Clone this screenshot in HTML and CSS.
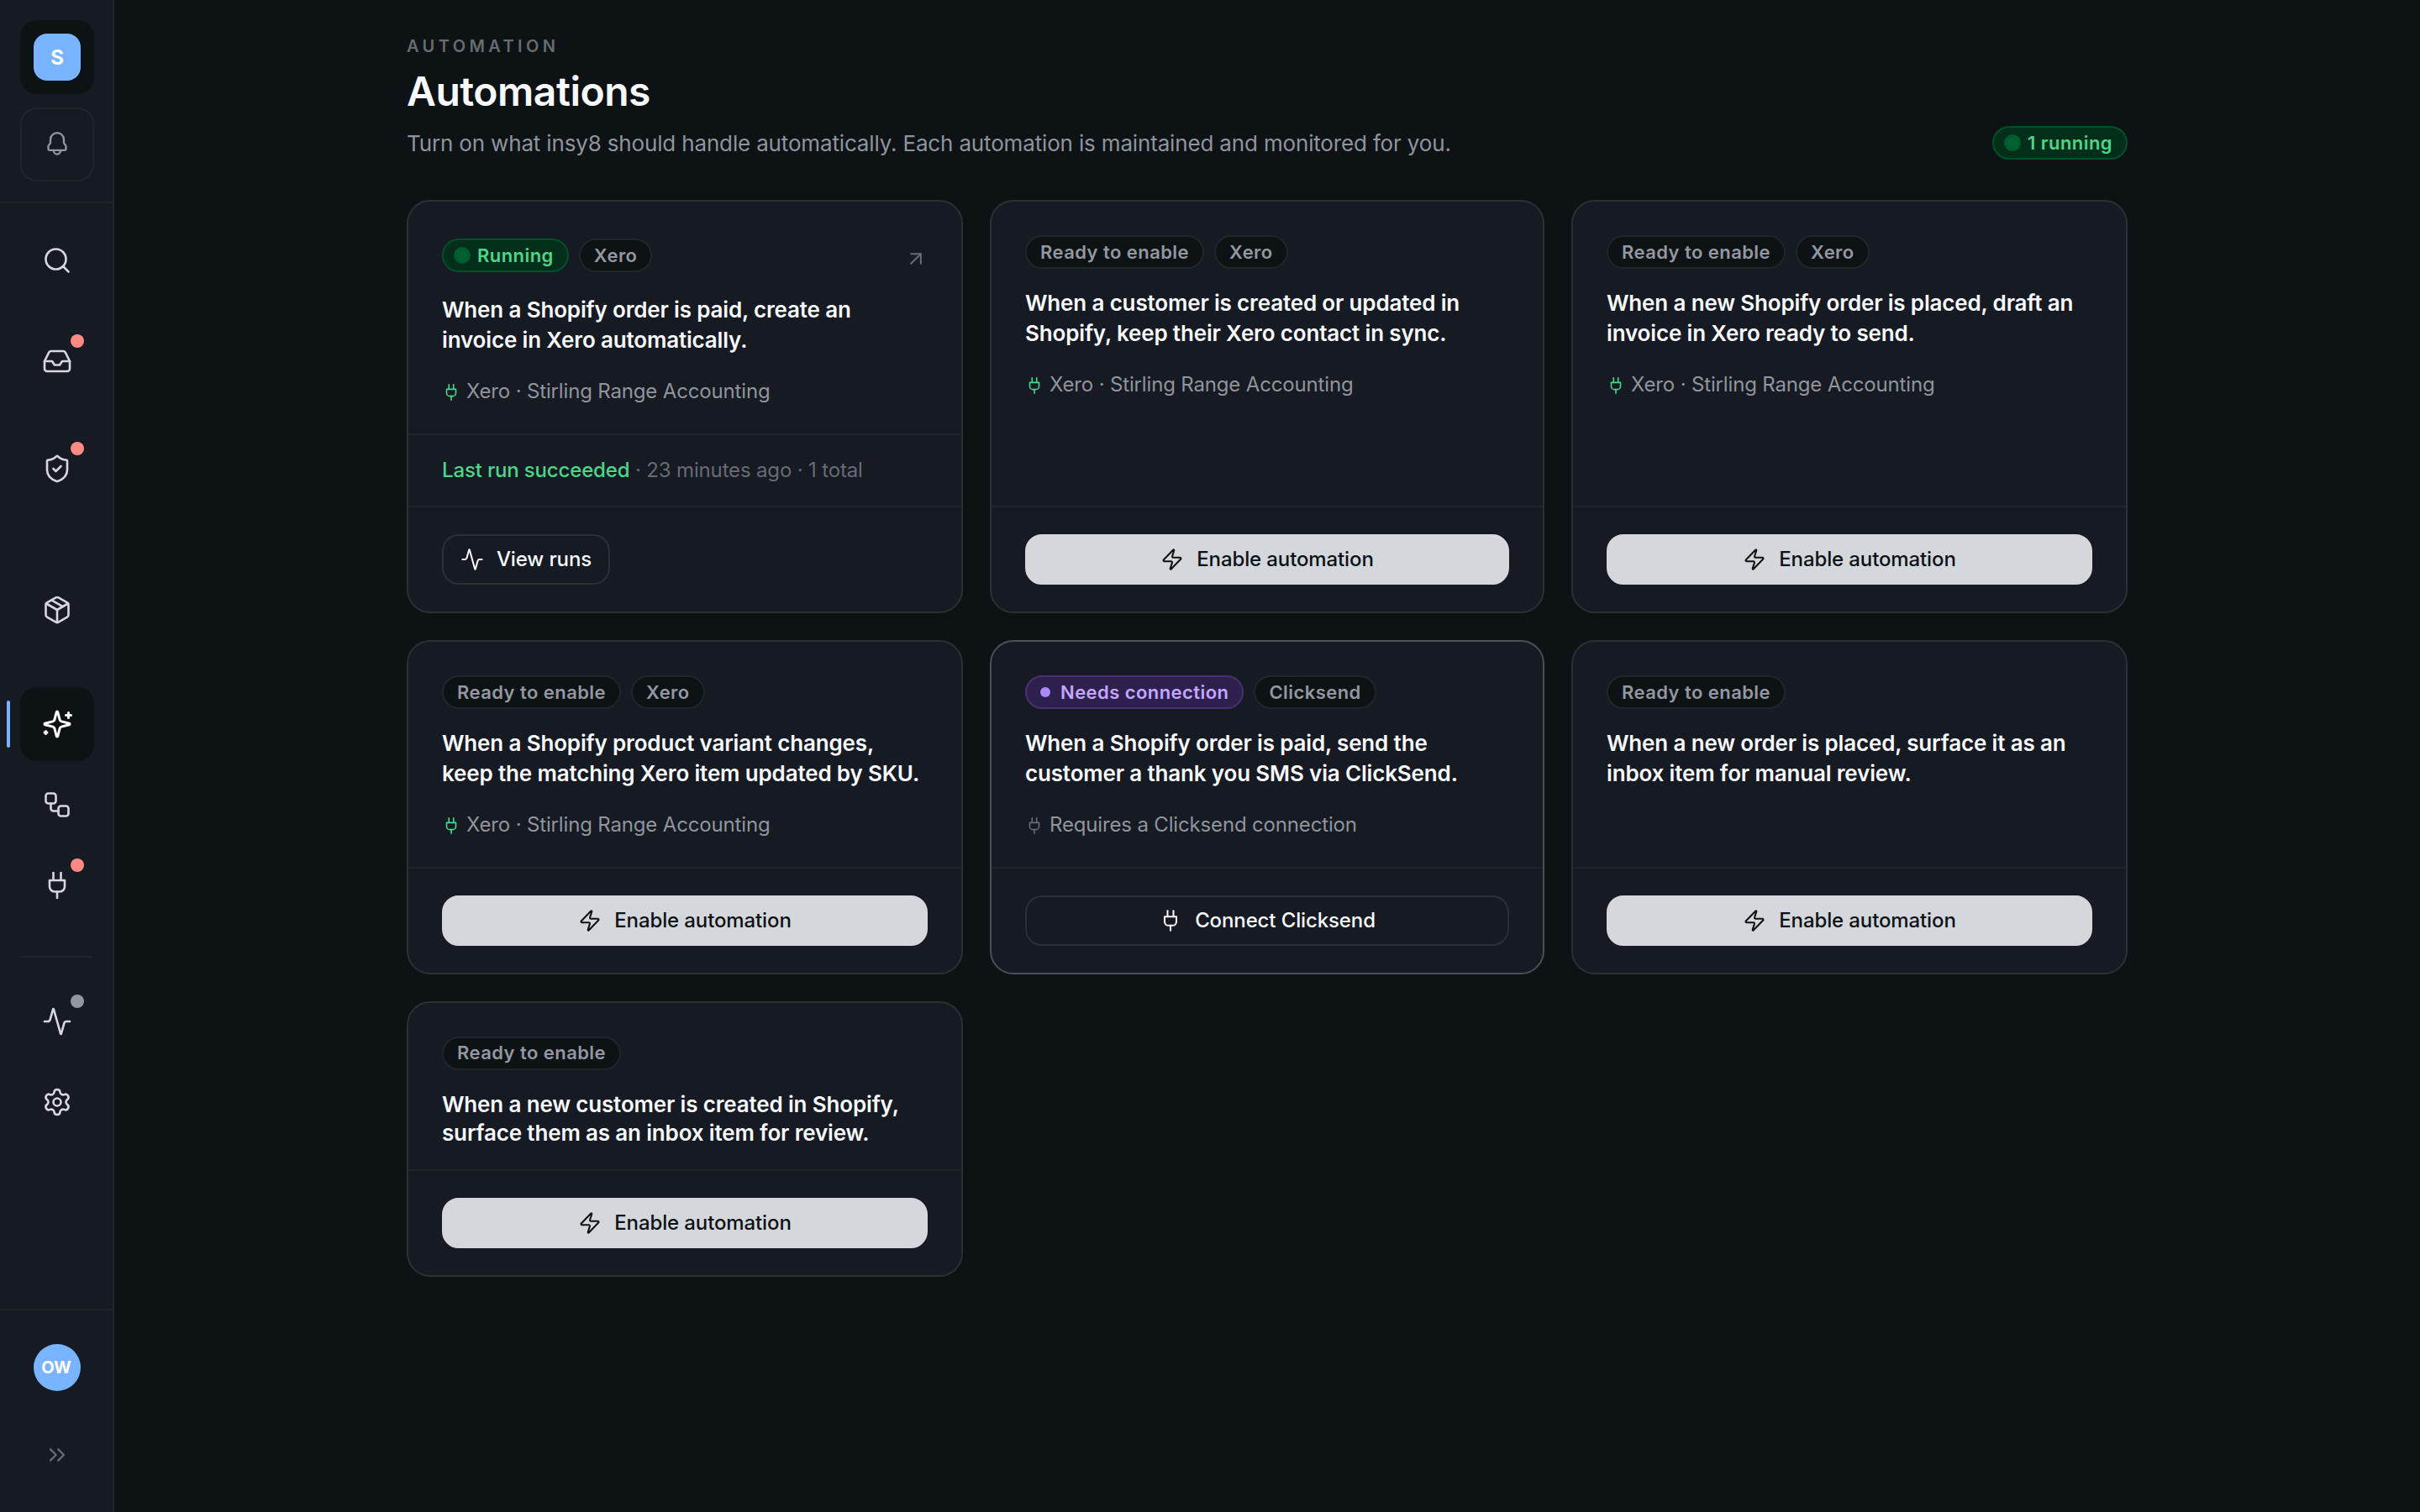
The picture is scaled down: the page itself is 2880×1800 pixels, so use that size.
FILE: index.html
```html
<!DOCTYPE html>
<html lang="en">
<head>
  <meta charset="UTF-8" />
  <title>Automations</title>
  <meta name="viewport" content="width=device-width, initial-scale=1.0" />
  <link rel="stylesheet" href="styles.css">
</head>
<body>

  <!-- shared icons -->
  <svg class="icon-defs" aria-hidden="true">
    <symbol id="i-bell" viewBox="0 0 24 24"><path d="M12 1.6a6 6 0 0 0-6 6v2.6c0 .6-.2 1-.6 1.4l-.7.8c-.4.4-.6.9-.6 1.4v2c0 .8.6 1.4 1.4 1.4h13c.8 0 1.4-.6 1.4-1.4v-2c0-.5-.2-1-.6-1.4l-.7-.8c-.4-.4-.6-.8-.6-1.4V7.6a6 6 0 0 0-6-6Z"/><path d="M8.9 17.4a3.1 3.3 0 0 0 6.2 0"/></symbol>
    <symbol id="i-search" viewBox="0 0 24 24"><circle cx="11" cy="11" r="8"/><path d="m21 21-4.3-4.3"/></symbol>
    <symbol id="i-inbox" viewBox="0 0 24 24"><path d="M22 12h-6l-2 3h-4l-2-3H2"/><path d="M5.45 5.11 2 12v6a2 2 0 0 0 2 2h16a2 2 0 0 0 2-2v-6l-3.45-6.89A2 2 0 0 0 16.76 4H7.24a2 2 0 0 0-1.79 1.11z"/></symbol>
    <symbol id="i-shield" viewBox="0 0 24 24"><path d="M20 13c0 5-3.5 7.5-7.66 8.95a1 1 0 0 1-.67-.01C7.5 20.5 4 18 4 13V6a1 1 0 0 1 1-1c2 0 4.5-1.2 6.24-2.72a1.17 1.17 0 0 1 1.52 0C14.51 3.81 17 5 19 5a1 1 0 0 1 1 1z"/><path d="m9 12 2 2 4-4"/></symbol>
    <symbol id="i-package" viewBox="0 0 24 24"><path d="m7.5 4.27 9 5.15"/><path d="M21 8a2 2 0 0 0-1-1.73l-7-4a2 2 0 0 0-2 0l-7 4A2 2 0 0 0 3 8v8a2 2 0 0 0 1 1.73l7 4a2 2 0 0 0 2 0l7-4A2 2 0 0 0 21 16Z"/><path d="m3.3 7 8.7 5 8.7-5"/><path d="M12 22V12"/></symbol>
    <symbol id="i-sparkles" viewBox="0 0 24 24"><path d="M9.937 15.5A2 2 0 0 0 8.5 14.063l-6.135-1.582a.5.5 0 0 1 0-.962L8.5 9.936A2 2 0 0 0 9.937 8.5l1.582-6.135a.5.5 0 0 1 .963 0L14.063 8.5A2 2 0 0 0 15.5 9.937l6.135 1.581a.5.5 0 0 1 0 .964L15.5 14.063a2 2 0 0 0-1.437 1.437l-1.582 6.135a.5.5 0 0 1-.963 0z"/><path d="M21 3v4"/><path d="M23 5h-4"/><path d="M3 17.6v2"/><path d="M4 18.6H2"/></symbol>
    <symbol id="i-workflow" viewBox="0 0 24 24"><rect width="8" height="8" x="3" y="3" rx="2"/><path d="M7 11v4a2 2 0 0 0 2 2h4"/><rect width="8" height="8" x="13" y="13" rx="2"/></symbol>
    <symbol id="i-plug" viewBox="0 0 24 24"><path d="M12 22v-5"/><path d="M9 8V2"/><path d="M15 8V2"/><path d="M18 8v5a4 4 0 0 1-4 4h-4a4 4 0 0 1-4-4V8Z"/></symbol>
    <symbol id="i-activity" viewBox="0 0 24 24"><path d="M22 12h-2.48a2 2 0 0 0-1.93 1.46l-2.35 8.36a.25.25 0 0 1-.48 0L9.24 2.18a.25.25 0 0 0-.48 0l-2.35 8.36A2 2 0 0 1 4.49 12H2"/></symbol>
    <symbol id="i-settings" viewBox="0 0 24 24"><path d="M9.671 4.136a2.34 2.34 0 0 1 4.659 0 2.34 2.34 0 0 0 3.319 1.915 2.34 2.34 0 0 1 2.33 4.033 2.34 2.34 0 0 0 0 3.831 2.34 2.34 0 0 1-2.33 4.033 2.34 2.34 0 0 0-3.319 1.915 2.34 2.34 0 0 1-4.659 0 2.34 2.34 0 0 0-3.32-1.915 2.34 2.34 0 0 1-2.33-4.033 2.34 2.34 0 0 0 0-3.831A2.34 2.34 0 0 1 6.35 6.051a2.34 2.34 0 0 0 3.319-1.915"/><circle cx="12" cy="12" r="3"/></symbol>
    <symbol id="i-chevrons" viewBox="0 0 24 24"><path d="m6 17 5-5-5-5"/><path d="m13 17 5-5-5-5"/></symbol>
    <symbol id="i-arrow" viewBox="0 0 24 24"><path d="M7 7h10v10"/><path d="M7 17 17 7"/></symbol>
    <symbol id="i-zap" viewBox="0 0 24 24"><path d="M4 14a1 1 0 0 1-.78-1.63l9.9-10.2a.5.5 0 0 1 .86.46l-1.92 6.02A1 1 0 0 0 13 10h7a1 1 0 0 1 .78 1.63l-9.9 10.2a.5.5 0 0 1-.86-.46l1.92-6.02A1 1 0 0 0 11 14z"/></symbol>
  </svg>

  <aside class="sidebar">
    <div class="sidebar-top">
      <a class="workspace" href="#"><span class="logo">S</span></a>
      <button class="bell"><svg class="icon"><use href="#i-bell"/></svg></button>
    </div>

    <nav class="sidebar-nav">
      <a class="nav-item nav-search" href="#"><svg class="icon"><use href="#i-search"/></svg></a>
      <a class="nav-item nav-inbox" href="#"><svg class="icon"><use href="#i-inbox"/></svg><span class="badge"></span></a>
      <a class="nav-item nav-approvals" href="#"><svg class="icon"><use href="#i-shield"/></svg><span class="badge"></span></a>
      <a class="nav-item nav-products" href="#"><svg class="icon"><use href="#i-package"/></svg></a>
      <div class="nav-group">
        <a class="nav-item active" href="#"><svg class="icon"><use href="#i-sparkles"/></svg></a>
        <a class="nav-item" href="#"><svg class="icon"><use href="#i-workflow"/></svg></a>
        <a class="nav-item" href="#"><svg class="icon"><use href="#i-plug"/></svg><span class="badge"></span></a>
      </div>
      <div class="nav-group nav-system">
        <a class="nav-item" href="#"><svg class="icon"><use href="#i-activity"/></svg><span class="badge badge-muted"></span></a>
        <a class="nav-item" href="#"><svg class="icon"><use href="#i-settings"/></svg></a>
      </div>
    </nav>

    <div class="sidebar-bottom">
      <span class="avatar">OW</span>
      <button class="expand"><svg class="icon"><use href="#i-chevrons"/></svg></button>
    </div>
  </aside>

  <main>
    <div class="page">
      <header class="page-header">
        <div>
          <p class="eyebrow">Automation</p>
          <h1>Automations</h1>
          <p class="lead">Turn on what insy8 should handle automatically. Each automation is maintained and monitored for you.</p>
        </div>
        <span class="tag tag-green"><i class="dot"></i>1 running</span>
      </header>

      <section class="cards">
        <article class="card">
          <div class="card-body">
            <div class="tags">
              <span class="tag tag-green"><i class="dot"></i>Running</span>
              <span class="tag">Xero</span>
              <a class="open" href="#"><svg class="icon"><use href="#i-arrow"/></svg></a>
            </div>
            <h2>When a Shopify order is paid, create an<br>invoice in Xero automatically.</h2>
            <p class="connection connected"><svg class="icon"><use href="#i-plug"/></svg>Xero · Stirling Range Accounting</p>
          </div>
          <p class="last-run"><b>Last run succeeded</b> · 23 minutes ago · 1 total</p>
          <div class="card-footer">
            <button class="btn btn-small"><svg class="icon"><use href="#i-activity"/></svg>View runs</button>
          </div>
        </article>

        <article class="card">
          <div class="card-body">
            <div class="tags">
              <span class="tag">Ready to enable</span>
              <span class="tag">Xero</span>
            </div>
            <h2>When a customer is created or updated in<br>Shopify, keep their Xero contact in sync.</h2>
            <p class="connection connected"><svg class="icon"><use href="#i-plug"/></svg>Xero · Stirling Range Accounting</p>
          </div>
          <div class="card-footer">
            <button class="btn btn-primary"><svg class="icon"><use href="#i-zap"/></svg>Enable automation</button>
          </div>
        </article>

        <article class="card">
          <div class="card-body">
            <div class="tags">
              <span class="tag">Ready to enable</span>
              <span class="tag">Xero</span>
            </div>
            <h2>When a new Shopify order is placed, draft an<br>invoice in Xero ready to send.</h2>
            <p class="connection connected"><svg class="icon"><use href="#i-plug"/></svg>Xero · Stirling Range Accounting</p>
          </div>
          <div class="card-footer">
            <button class="btn btn-primary"><svg class="icon"><use href="#i-zap"/></svg>Enable automation</button>
          </div>
        </article>

        <article class="card">
          <div class="card-body">
            <div class="tags">
              <span class="tag">Ready to enable</span>
              <span class="tag">Xero</span>
            </div>
            <h2>When a Shopify product variant changes,<br>keep the matching Xero item updated by SKU.</h2>
            <p class="connection connected"><svg class="icon"><use href="#i-plug"/></svg>Xero · Stirling Range Accounting</p>
          </div>
          <div class="card-footer">
            <button class="btn btn-primary"><svg class="icon"><use href="#i-zap"/></svg>Enable automation</button>
          </div>
        </article>

        <article class="card card-attention">
          <div class="card-body">
            <div class="tags">
              <span class="tag tag-purple"><i class="dot"></i>Needs connection</span>
              <span class="tag">Clicksend</span>
            </div>
            <h2>When a Shopify order is paid, send the<br>customer a thank you SMS via ClickSend.</h2>
            <p class="connection"><svg class="icon"><use href="#i-plug"/></svg>Requires a Clicksend connection</p>
          </div>
          <div class="card-footer">
            <button class="btn"><svg class="icon"><use href="#i-plug"/></svg>Connect Clicksend</button>
          </div>
        </article>

        <article class="card">
          <div class="card-body">
            <div class="tags">
              <span class="tag">Ready to enable</span>
            </div>
            <h2>When a new order is placed, surface it as an<br>inbox item for manual review.</h2>
          </div>
          <div class="card-footer">
            <button class="btn btn-primary"><svg class="icon"><use href="#i-zap"/></svg>Enable automation</button>
          </div>
        </article>

        <article class="card card-compact">
          <div class="card-body">
            <div class="tags">
              <span class="tag">Ready to enable</span>
            </div>
            <h2>When a new customer is created in Shopify,<br>surface them as an inbox item for review.</h2>
          </div>
          <div class="card-footer">
            <button class="btn btn-primary"><svg class="icon"><use href="#i-zap"/></svg>Enable automation</button>
          </div>
        </article>
      </section>
    </div>
  </main>

</body>
</html>
```
FILE: styles.css
```css
* {
  box-sizing: border-box;
}
body {
  margin: 0;
  height: 100vh;
  display: flex;
  overflow: hidden;
  background: #0d1214;
  color: #f7f9fc;
  font-family: Inter, sans-serif;
}
h1, h2, p {
  margin: 0;
}
a {
  color: inherit;
  text-decoration: none;
}
button {
  font: inherit;
  color: inherit;
  background: none;
  border: none;
  padding: 0;
}
.icon-defs {
  position: absolute;
  width: 0;
  height: 0;
}
.icon {
  flex: none;
  fill: none;
  stroke: currentColor;
  stroke-width: 1.75;
  stroke-linecap: round;
  stroke-linejoin: round;
}

/* sidebar */
.sidebar {
  width: 136px;
  flex: none;
  display: flex;
  flex-direction: column;
  background: #161a22;
  border-right: 2px solid #202529;
}
.sidebar-top {
  display: flex;
  flex-direction: column;
  gap: 16px;
  padding: 24px 0 24px 24px;
  border-bottom: 2px solid #202529;
}
.workspace, .bell, .nav-item {
  width: 88px;
  height: 88px;
  display: flex;
  align-items: center;
  justify-content: center;
  border-radius: 20px;
}
.workspace {
  background: #0d1214;
}
.logo, .avatar {
  width: 56px;
  height: 56px;
  display: flex;
  align-items: center;
  justify-content: center;
  background: #78b4ff;
  color: #fff;
  font-weight: 700;
}
.logo {
  border-radius: 16px;
  font-size: 24px;
}
.bell {
  border: 2px solid #202529;
  color: #9297a0;
}
.bell .icon {
  width: 32px;
  height: 32px;
}
.sidebar-nav {
  flex: 1;
  padding: 24px 0 0 24px;
  color: #d4d7dc;
}
.nav-item {
  position: relative;
}
.nav-item .icon {
  width: 36px;
  height: 36px;
}
.nav-inbox {
  margin-top: 32px;
}
.nav-approvals {
  margin-top: 40px;
}
.nav-products {
  margin: 80px 0 48px;
}
.nav-group {
  display: flex;
  flex-direction: column;
  gap: 8px;
}
.nav-system {
  width: 86px;
  margin-top: 40px;
  padding-top: 32px;
  border-top: 2px solid #202529;
}
.active {
  background: #0d1214;
  color: #fff;
}
.active .icon {
  stroke-width: 2;
}
.active::before {
  content: "";
  position: absolute;
  left: -16px;
  top: 16px;
  width: 4px;
  height: 56px;
  border-radius: 2px;
  background: #78b4ff;
}
.badge {
  position: absolute;
  top: 12px;
  right: 12px;
  width: 16px;
  height: 16px;
  border-radius: 50%;
  background: #ff8a80;
}
.badge-muted {
  background: #9297a0;
}
.sidebar-bottom {
  height: 242px;
  display: flex;
  flex-direction: column;
  align-items: center;
  gap: 60px;
  padding: 40px 0 0 2px;
  border-top: 2px solid #202529;
}
.avatar {
  border-radius: 50%;
  font-size: 20px;
  padding-right: 2px;
}
.expand {
  color: #666b74;
}
.expand .icon {
  display: block;
  width: 32px;
  height: 32px;
}

/* page */
main {
  flex: 1;
  padding-top: 40px;
}
.page {
  width: 2048px;
  margin: 0 auto;
}
.page-header {
  height: 150px;
  display: flex;
  justify-content: space-between;
  align-items: flex-end;
  margin-bottom: 48px;
}
.eyebrow {
  font-size: 20px;
  line-height: 30px;
  font-weight: 600;
  letter-spacing: 4.4px;
  text-transform: uppercase;
  color: #666b70;
}
h1 {
  margin-top: 10px;
  font-size: 48px;
  line-height: 58px;
  font-weight: 600;
  letter-spacing: -0.48px;
}
.lead {
  margin-top: 14px;
  font-size: 26px;
  line-height: 38px;
  letter-spacing: -0.16px;
  color: #8f949d;
}
.tag {
  height: 40px;
  display: inline-flex;
  align-items: center;
  gap: 12px;
  padding: 0 16px;
  border: 2px solid #202529;
  border-radius: 20px;
  background: #0d1214;
  color: #9297a0;
  font-size: 22px;
  font-weight: 600;
  letter-spacing: 0.44px;
  white-space: nowrap;
}
.tag-green {
  background: #022e1a;
  border-color: #00512b;
  color: #4bd68a;
}
.tag-purple {
  background: #2e204c;
  border-color: #483170;
  color: #c3a6ff;
}
.dot {
  width: 12px;
  height: 12px;
  border-radius: 50%;
  background: #a98aff;
}
.tag-green .dot {
  background: #006232;
  box-shadow: 0 0 0 4px #005c2f;
}

/* cards */
.cards {
  display: grid;
  grid-template-columns: 662px 660px 662px;
  gap: 32px;
}
.card {
  display: flex;
  flex-direction: column;
  background: #161a22;
  border: 2px solid #2b3034;
  border-radius: 28px;
}
.card-attention {
  border-color: #4b5056;
}
.card-body {
  flex: 1;
  padding: 40px 40px 32px;
}
.tags {
  display: flex;
  align-items: center;
  gap: 12px;
}
.open {
  width: 28px;
  height: 48px;
  display: flex;
  align-items: center;
  margin-left: auto;
  padding-top: 8px;
  color: #666b74;
}
.open .icon {
  width: 28px;
  height: 28px;
}
h2 {
  margin-top: 23px;
  font-size: 26px;
  line-height: 36px;
  font-weight: 600;
  letter-spacing: -0.16px;
  white-space: nowrap;
}
.connection {
  display: flex;
  align-items: center;
  gap: 7px;
  margin-top: 25px;
  font-size: 24px;
  line-height: 36px;
  letter-spacing: -0.16px;
  color: #8f949d;
}
.connection .icon {
  width: 22px;
  height: 22px;
  margin-top: 2px;
  color: #666b74;
}
.connected .icon {
  color: #4bd68a;
}
.last-run {
  padding: 24px 40px;
  border-top: 2px solid #202529;
  font-size: 24px;
  line-height: 36px;
  letter-spacing: -0.16px;
  color: #666b74;
}
.last-run b {
  font-weight: 500;
  color: #4bd68a;
}
.card-footer {
  padding: 32px 40px;
  border-top: 2px solid #202529;
}
.btn {
  width: 100%;
  height: 60px;
  display: flex;
  align-items: center;
  justify-content: center;
  gap: 15px;
  padding-bottom: 1px;
  border: 2px solid #2b3034;
  border-radius: 20px;
  font-size: 24px;
  font-weight: 500;
  letter-spacing: -0.12px;
}
.btn .icon {
  width: 28px;
  height: 28px;
}
.btn-small {
  width: 200px;
}
.btn-primary {
  background: #d4d7dc;
  border-color: #d4d7dc;
  color: #0d1214;
}
.card-compact .card-body {
  padding-bottom: 26px;
}
.card-compact .tag {
  padding-bottom: 3px;
}
.card-compact h2 {
  margin-top: 24px;
  line-height: 34px;
}
```
